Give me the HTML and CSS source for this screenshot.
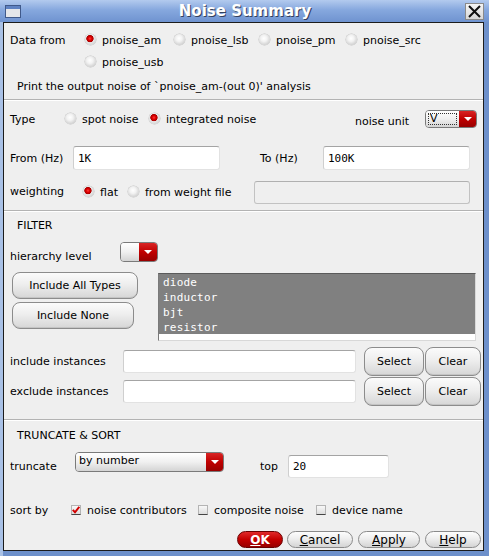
FILE: index.html
```html
<!DOCTYPE html>
<html>
<head>
<meta charset="utf-8">
<link rel="stylesheet" href="styles.css">
</head>
<body>
<div class="window">
  <div class="titlebar">
    <svg class="win-icon" width="16" height="13" viewBox="0 0 16 13"><rect x="0.5" y="0.5" width="15" height="12" fill="#e4e6ea" stroke="#40598a"/><rect x="1" y="1" width="14" height="3" fill="#5f82c2"/></svg>
    <div class="title">Noise Summary</div>
    <div class="close"><svg width="13" height="13" viewBox="0 0 13 13"><path d="M1 1 L12 12 M12 1 L1 12" stroke="#111" stroke-width="2"/></svg></div>
  </div>
  <div class="frame">
    <div class="sec sec-data">
      <div class="data-grid">
        <span class="lbl">Data from</span>
        <div class="opt"><span class="radio on"></span>pnoise_am</div>
        <div class="opt"><span class="radio"></span>pnoise_lsb</div>
        <div class="opt"><span class="radio"></span>pnoise_pm</div>
        <div class="opt"><span class="radio"></span>pnoise_src</div>
        <div class="opt col2"><span class="radio"></span>pnoise_usb</div>
      </div>
      <div class="note">Print the output noise of `pnoise_am-(out 0)' analysis</div>
    </div>
    <div class="sep"></div>
    <div class="sec sec-type">
      <div class="row row-type">
        <span class="lbl w-type">Type</span>
        <div class="opt w-spot"><span class="radio"></span>spot noise</div>
        <div class="opt"><span class="radio on"></span>integrated noise</div>
        <span class="lbl unit-lbl">noise unit</span>
        <div class="combo combo-unit"><span class="combo-val"><span class="focus">V</span></span><span class="combo-btn"><i class="tri"></i></span></div>
      </div>
      <div class="row row-freq">
        <span class="lbl w-from">From (Hz)</span>
        <div class="field w-freq">1K</div>
        <span class="lbl w-to">To (Hz)</span>
        <div class="field w-freq">100K</div>
      </div>
      <div class="row row-weight">
        <span class="lbl w-weight">weighting</span>
        <div class="opt w-flat"><span class="radio on"></span>flat</div>
        <div class="opt"><span class="radio"></span>from weight file</div>
        <div class="field disabled w-wfile"></div>
      </div>
    </div>
    <div class="sep"></div>
    <div class="sec sec-filter">
      <div class="heading">FILTER</div>
      <div class="row row-hier">
        <span class="lbl w-hier">hierarchy level</span>
        <div class="combo combo-hier"><span class="combo-val"></span><span class="combo-btn"><i class="tri"></i></span></div>
      </div>
      <div class="row row-types">
        <div class="type-btns">
          <div class="btn btn-all">Include All Types</div>
          <div class="btn btn-none">Include None</div>
        </div>
        <div class="listbox">
          <div class="item">diode</div>
          <div class="item">inductor</div>
          <div class="item">bjt</div>
          <div class="item">resistor</div>
        </div>
      </div>
      <div class="row row-inst">
        <span class="lbl w-inst">include instances</span>
        <div class="field w-inst-field"></div>
        <div class="btn btn-select">Select</div>
        <div class="btn btn-clear">Clear</div>
      </div>
      <div class="row row-inst row-inst2">
        <span class="lbl w-inst">exclude instances</span>
        <div class="field w-inst-field"></div>
        <div class="btn btn-select">Select</div>
        <div class="btn btn-clear">Clear</div>
      </div>
    </div>
    <div class="sep"></div>
    <div class="sec sec-sort">
      <div class="heading">TRUNCATE &amp; SORT</div>
      <div class="row row-trunc">
        <span class="lbl w-trunc">truncate</span>
        <div class="combo combo-trunc"><span class="combo-val">by number</span><span class="combo-btn"><i class="tri"></i></span></div>
        <span class="lbl w-top">top</span>
        <div class="field w-topf">20</div>
      </div>
      <div class="row row-sortby">
        <span class="lbl w-sort">sort by</span>
        <div class="opt w-ck1"><span class="check on"><svg width="8" height="8" viewBox="0 0 8 8"><path d="M0.8 3.8 L3 6.3 L7.3 0.8" fill="none" stroke="#d20000" stroke-width="2"/></svg></span>noise contributors</div>
        <div class="opt w-ck2"><span class="check"></span>composite noise</div>
        <div class="opt"><span class="check"></span>device name</div>
      </div>
      <div class="row row-actions">
        <div class="pill ok"><u>O</u>K</div>
        <div class="pill cancel"><u>C</u>ancel</div>
        <div class="pill apply"><u>A</u>pply</div>
        <div class="pill help"><u>H</u>elp</div>
      </div>
    </div>
  </div>
</div>
</body>
</html>
```

FILE: styles.css
```css
* { box-sizing: border-box; margin: 0; padding: 0; }
html, body { width: 489px; height: 556px; overflow: hidden; }
body { font: 11px "DejaVu Sans", "Liberation Sans", sans-serif; color: #000; background: #6c8fcb; }

.window { width: 489px; height: 556px; display: flex; flex-direction: column;
  background: linear-gradient(90deg, #a9c1e6 0, #a9c1e6 3px, #6d90cb 3px); }
.titlebar { height: 22px; display: flex; align-items: center; flex-shrink: 0;
  background: linear-gradient(#b3caee, #86a8de 45%, #6f93d0); }
.win-icon { margin-left: 5px; flex-shrink: 0; }
.title { flex: 1; text-align: center; color: #fff; font-weight: bold; font-size: 15px; line-height: 22px;
  text-shadow: 1px 1px 0 #34405c; margin-left: 4px; }
.close { width: 19px; height: 17px; margin-right: 5px; flex-shrink: 0; display: flex; align-items: center; justify-content: center;
  background: linear-gradient(#f4f4f4, #d8d8d8); border: 1px solid #8a8a8a; }

.frame { flex: 1; margin: 0 5px 5px 3px; border: 1px solid #1c1c1c; background: #efefef;
  display: flex; flex-direction: column; overflow: hidden; }

.sec { padding: 0 2px 0 6px; }
.sep { height: 2px; border-top: 1px solid #b3b3b3; border-bottom: 1px solid #ffffff; flex-shrink: 0; }

.row { display: flex; align-items: center; }
.row > * { flex-shrink: 0; }
.lbl { white-space: nowrap; }

.opt { display: flex; align-items: center; white-space: nowrap; }
.radio { width: 11px; height: 11px; border-radius: 50%; margin-right: 6px; margin-top: -2px; flex-shrink: 0;
  background: radial-gradient(circle at 45% 40%, #ffffff 0, #f2f2f2 35%, #d0d0d0 75%, #a8a8a8 100%);
  box-shadow: 0 0 0 0.5px #c4c4c4; }
.radio.on { background: radial-gradient(circle at 45% 42%, #ff3a3a 0, #e00000 20%, #a80000 38%, #e8e8e8 45%, #d2d2d2 75%, #a8a8a8 100%); }

/* section 1 */
.sec-data { padding-top: 6px; padding-bottom: 1px; }
.data-grid { display: grid; grid-template-columns: 75px 89px 85px 87px auto; grid-auto-rows: 22px; align-items: center; }
.col2 { grid-column: 2; }
.note { height: 22px; line-height: 22px; margin-top: 3px; padding-left: 7px; }

/* section 2 */
.sec-type { padding-top: 7px; padding-bottom: 6px; }
.row-type { height: 22px; }
.w-type { width: 55px; }
.w-spot { width: 84px; }
.unit-lbl { margin-left: auto; width: 70px; padding-top: 4px; }
.row-freq { height: 24px; margin-top: 16px; }
.w-from { width: 63px; }
.w-to { width: 63px; margin-left: 40px; }
.w-freq { width: 147px; height: 24px; }
.row-weight { height: 23px; margin-top: 11px; }
.w-weight { width: 73px; margin-top: -3px; }
.w-flat { width: 45px; }
.w-wfile { width: 216px; height: 23px; margin-left: auto; margin-right: 11px; }

.field { background: #fff; border: 1px solid #e2e2e2; border-top-color: #a4a4a4; border-left-color: #cfcfcf;
  border-radius: 3px; font: 11px "DejaVu Sans Mono", "Liberation Mono", monospace; padding-left: 4px;
  display: flex; align-items: center; }
.field.disabled { background: #efefef; border-color: #c2c2c2; border-top-color: #b0b0b0; }

/* combo */
.combo { display: flex; border: 1px solid #7a7a7a; border-radius: 4px; overflow: hidden; height: 20px; }
.combo-val { flex: 1; background: linear-gradient(#ffffff, #f0f0f0 50%, #d4d4d4); padding: 1px 2px; display: flex; align-items: flex-start; white-space: nowrap; }
.combo-btn { width: 17px; background: linear-gradient(#d82424, #c00000 50%, #980000); display: flex; align-items: center; justify-content: center; }
.tri { display: block; width: 0; height: 0; border-left: 4px solid transparent; border-right: 4px solid transparent; border-top: 4px solid #fff; }
.combo-unit { width: 52px; height: 18px; margin-right: 4px; }
.combo-unit .combo-val { padding: 2px; }
.focus { display: block; width: 100%; height: 12px; border: 1px dotted #333; font-size: 11px; line-height: 10px; padding-left: 1px; }
.combo-hier { width: 38px; }
.combo-hier .combo-btn { width: 18px; }
.combo-trunc { width: 149px; }
.combo-trunc .combo-val { padding: 0 3px; line-height: 16px; }

/* section 3 */
.sec-filter { padding-top: 6px; padding-bottom: 13px; }
.heading { height: 16px; line-height: 16px; padding-left: 7px; }
.row-hier { margin-top: 8px; height: 22px; align-items: flex-start; }
.w-hier { width: 110px; line-height: 14px; margin-top: 8px; }
.row-types { margin-top: 8px; height: 69px; align-items: flex-start; }
.type-btns { width: 148px; padding-left: 2px; display: flex; flex-direction: column; gap: 3px; }
.btn { height: 27px; display: flex; align-items: center; justify-content: center; white-space: nowrap;
  border: 1px solid #8c8c8c; border-radius: 8px;
  background: linear-gradient(#fbfbfb, #eeeeee 45%, #d6d6d6); box-shadow: inset 0 -1px 0 #c4c4c4; }
.btn-all { width: 126px; }
.btn-none { width: 122px; }
.listbox { width: 318px; height: 68px; margin-top: 1px; background: #fff;
  border: 1px solid #d8d8d8; border-top-color: #5a5a5a; border-left-color: #7a7a7a; }
.item { height: 15px; background: #808080; color: #fff; padding: 2px 0 0 4px;
  font: 11px/13px "DejaVu Sans Mono", "Liberation Mono", monospace; letter-spacing: 0.2px; }

.row-inst { margin-top: 6px; height: 29px; }
.row-inst2 { margin-top: 1px; }
.w-inst { width: 113px; }
.w-inst-field { width: 233px; height: 23px; }
.btn-select { width: 60px; height: 29px; margin-left: 8px; }
.btn-clear { width: 56px; height: 29px; margin-left: 1px; }

/* section 4 */
.sec-sort { padding-top: 7px; }
.row-trunc { margin-top: 8px; height: 26px; align-items: flex-start; }
.w-trunc { width: 65px; line-height: 14px; margin-top: 8px; }
.w-top { width: 28px; margin-left: 36px; line-height: 14px; margin-top: 8px; }
.w-topf { width: 101px; height: 23px; margin-top: 3px; }

.row-sortby { margin-top: 22px; height: 20px; }
.w-sort { width: 61px; }
.w-ck1 { width: 127px; }
.w-ck2 { width: 118px; }
.check { width: 10px; height: 10px; margin-right: 6px; flex-shrink: 0; display: flex; align-items: center; justify-content: center;
  background: linear-gradient(#f8f8f8, #dcdcdc); border: 1px solid #b4b4b4; border-bottom-color: #444; }

.row-actions { margin-top: 11px; height: 17px; justify-content: flex-end; gap: 4px; padding-right: 0; }
.pill { height: 17px; border-radius: 9px; display: flex; align-items: center; justify-content: center;
  border: 1px solid #8a8a8a; background: linear-gradient(#fdfdfd, #eeeeee 45%, #d4d4d4); font-size: 12px; }
.ok { width: 46px; color: #fff; font-weight: bold; border-color: #6a0000;
  background: linear-gradient(#e02a2a, #c40000 50%, #980000); }
.cancel { width: 66px; }
.apply { width: 62px; margin-left: 1px; }
.help { width: 56px; margin-left: 1px; }
```
